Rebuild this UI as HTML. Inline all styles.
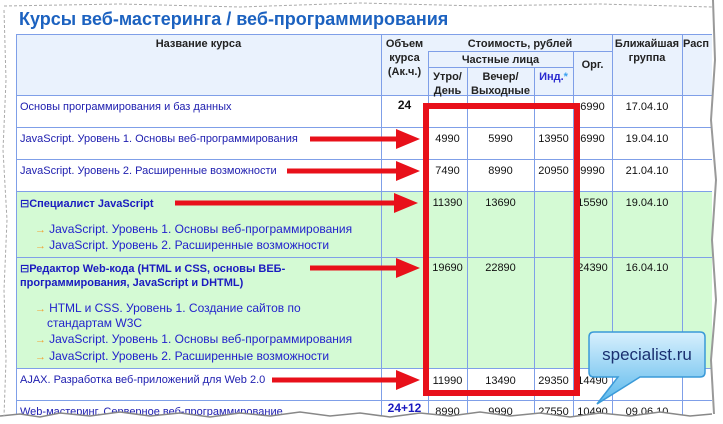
<!DOCTYPE html>
<html><head><meta charset="utf-8"><style>
body{margin:0;width:723px;height:424px;background:#fff;overflow:hidden;position:relative;font-family:"Liberation Sans","DejaVu Sans",sans-serif}
.a{position:absolute}
.t{position:absolute;font-size:11px;color:#2020b0;white-space:nowrap}
.n{position:absolute;font-size:11px;color:#111;white-space:nowrap;text-align:center}
.h{position:absolute;font-size:11px;font-weight:bold;color:#222;text-align:center;line-height:14px}
.vl{position:absolute;width:1px;background:#7f9fe8}
.hl{position:absolute;height:1px;background:#7f9fe8}
.s{position:absolute;font-size:12px;color:#2222cc;white-space:nowrap}
.s:before{content:"→ ";color:#f0a030;font-size:11px;font-weight:bold}
</style></head><body>
<div class="a" style="left:19px;top:9px;font-size:18px;font-weight:bold;color:#1c62c0">Курсы веб-мастеринга / веб-программирования</div>
<div class="a" style="left:16px;top:34px;width:696px;height:61px;background:#eaf2fd"></div>
<div class="a" style="left:16px;top:191px;width:696px;height:177px;background:#d4fad4"></div>
<div class="hl" style="left:16px;top:34px;width:696px"></div>
<div class="hl" style="left:428px;top:51px;width:184px"></div>
<div class="hl" style="left:428px;top:67px;width:145px"></div>
<div class="hl" style="left:16px;top:95px;width:696px"></div>
<div class="hl" style="left:16px;top:127px;width:696px"></div>
<div class="hl" style="left:16px;top:159px;width:696px"></div>
<div class="hl" style="left:16px;top:191px;width:696px"></div>
<div class="hl" style="left:16px;top:257px;width:696px"></div>
<div class="hl" style="left:16px;top:368px;width:696px"></div>
<div class="hl" style="left:16px;top:400px;width:696px"></div>
<div class="vl" style="left:16px;top:34px;height:390px"></div>
<div class="vl" style="left:381px;top:34px;height:390px"></div>
<div class="vl" style="left:428px;top:51px;height:373px"></div>
<div class="vl" style="left:467px;top:67px;height:357px"></div>
<div class="vl" style="left:534px;top:67px;height:357px"></div>
<div class="vl" style="left:573px;top:51px;height:373px"></div>
<div class="vl" style="left:612px;top:34px;height:390px"></div>
<div class="vl" style="left:682px;top:34px;height:390px"></div>
<div class="h" style="left:16px;top:37px;width:365px">Название курса</div>
<div class="h" style="left:381px;top:37px;width:47px">Объем курса (Ак.ч.)</div>
<div class="h" style="left:428px;top:37px;width:184px">Стоимость, рублей</div>
<div class="h" style="left:428px;top:53px;width:145px">Частные лица</div>
<div class="h" style="left:573px;top:58px;width:39px">Орг.</div>
<div class="h" style="left:612px;top:37px;width:70px">Ближайшая группа</div>
<div class="h" style="left:683px;top:37px;width:40px;text-align:left">Расп</div>
<div class="h" style="left:428px;top:70px;width:39px">Утро/ День</div>
<div class="h" style="left:467px;top:70px;width:67px">Вечер/ Выходные</div>
<div class="h" style="left:534px;top:70px;width:39px;color:#2a2ad0">Инд.<span style="color:#3aa0f0">*</span></div>
<div class="t" style="left:20px;top:101px">Основы программирования и баз данных</div>
<div class="n" style="left:381px;top:98px;width:47px;font-weight:bold;font-size:12px">24</div>
<div class="n" style="left:573px;top:101px;width:39px">6990</div>
<div class="n" style="left:612px;top:101px;width:70px">17.04.10</div>
<div class="t" style="left:20px;top:133px">JavaScript. Уровень 1. Основы веб-программирования</div>
<div class="n" style="left:428px;top:133px;width:39px">4990</div><div class="n" style="left:467px;top:133px;width:67px">5990</div><div class="n" style="left:534px;top:133px;width:39px">13950</div><div class="n" style="left:573px;top:133px;width:39px">6990</div><div class="n" style="left:612px;top:133px;width:70px">19.04.10</div>
<div class="t" style="left:20px;top:165px">JavaScript. Уровень 2. Расширенные возможности</div>
<div class="n" style="left:428px;top:165px;width:39px">7490</div><div class="n" style="left:467px;top:165px;width:67px">8990</div><div class="n" style="left:534px;top:165px;width:39px">20950</div><div class="n" style="left:573px;top:165px;width:39px">9990</div><div class="n" style="left:612px;top:165px;width:70px">21.04.10</div>
<div class="t" style="left:20px;top:197px;font-weight:bold;color:#1a1ac0">⊟Специалист JavaScript</div>
<div class="s" style="left:35px;top:222px">JavaScript. Уровень 1. Основы веб-программирования</div>
<div class="s" style="left:35px;top:238px">JavaScript. Уровень 2. Расширенные возможности</div>
<div class="n" style="left:428px;top:197px;width:39px">11390</div><div class="n" style="left:467px;top:197px;width:67px">13690</div><div class="n" style="left:573px;top:197px;width:39px">15590</div><div class="n" style="left:612px;top:197px;width:70px">19.04.10</div>
<div class="t" style="left:20px;top:262px;font-weight:bold;color:#1a1ac0;line-height:14px">⊟Редактор Web-кода (HTML и CSS, основы ВЕБ-<br>программирования, JavaScript и DHTML)</div>
<div class="s" style="left:35px;top:301px">HTML и CSS. Уровень 1. Создание сайтов по</div>
<div class="a" style="left:47px;top:316px;font-size:12px;color:#2222cc">стандартам W3C</div>
<div class="s" style="left:35px;top:332px">JavaScript. Уровень 1. Основы веб-программирования</div>
<div class="s" style="left:35px;top:349px">JavaScript. Уровень 2. Расширенные возможности</div>
<div class="n" style="left:428px;top:262px;width:39px">19690</div><div class="n" style="left:467px;top:262px;width:67px">22890</div><div class="n" style="left:573px;top:262px;width:39px">24390</div><div class="n" style="left:612px;top:262px;width:70px">16.04.10</div>
<div class="t" style="left:20px;top:374px">AJAX. Разработка веб-приложений для Web 2.0</div>
<div class="n" style="left:428px;top:375px;width:39px">11990</div><div class="n" style="left:467px;top:375px;width:67px">13490</div><div class="n" style="left:534px;top:375px;width:39px">29350</div><div class="n" style="left:573px;top:375px;width:39px">14490</div>
<div class="t" style="left:20px;top:406px">Web-мастеринг. Серверное веб-программирование</div>
<div class="n" style="left:381px;top:401px;width:47px;font-weight:bold;font-size:12px;color:#1a1ac0">24+12</div>
<div class="n" style="left:428px;top:406px;width:39px">8990</div><div class="n" style="left:467px;top:406px;width:67px">9990</div><div class="n" style="left:534px;top:406px;width:39px">27550</div><div class="n" style="left:573px;top:406px;width:39px">10490</div><div class="n" style="left:612px;top:406px;width:70px">09.06.10</div>
<svg class="a" style="left:0;top:0" width="723" height="424">
<rect x="426" y="106" width="151" height="287" fill="none" stroke="#e8101a" stroke-width="6"/>
<g stroke="#e8101a" stroke-width="5" fill="#e8101a">
<line x1="310" y1="139" x2="400" y2="139"/><polygon points="396,129 420,139 396,149" stroke="none"/>
<line x1="287" y1="171" x2="400" y2="171"/><polygon points="396,161 420,171 396,181" stroke="none"/>
<line x1="175" y1="203" x2="398" y2="203"/><polygon points="394,193 418,203 394,213" stroke="none"/>
<line x1="310" y1="268" x2="400" y2="268"/><polygon points="396,258 420,268 396,278" stroke="none"/>
<line x1="272" y1="380" x2="400" y2="380"/><polygon points="396,370 420,380 396,390" stroke="none"/>
</g>
<defs><linearGradient id="g" x1="0" y1="0" x2="0" y2="1"><stop offset="0" stop-color="#d8f0fd"/><stop offset="1" stop-color="#5ab8ec"/></linearGradient></defs>
<path d="M594,332 H700 Q705,332 705,337 V372 Q705,377 700,377 H640 L597,404 L618,377 H594 Q589,377 589,372 V337 Q589,332 594,332 Z" fill="url(#g)" stroke="#3a9ad8" stroke-width="1.5"/>
<text x="647" y="360" text-anchor="middle" font-family="Liberation Sans,sans-serif" font-size="17" fill="#1a3070">specialist.ru</text>
<path d="M0,424 V416 L20,414 L40,417 L60,413 L90,416 L120,412 L150,416 L180,413 L210,417 L240,413 L270,416 L300,412 L330,416 L360,413 L390,417 L420,413 L450,416 L480,412 L510,416 L540,413 L570,417 L600,413 L630,416 L660,412 L690,416 L712,414 L712,0 H723 V424 Z" fill="#fff"/>
<path d="M0,416 L20,414 L40,417 L60,413 L90,416 L120,412 L150,416 L180,413 L210,417 L240,413 L270,416 L300,412 L330,416 L360,413 L390,417 L420,413 L450,416 L480,412 L510,416 L540,413 L570,417 L600,413 L630,416 L660,412 L690,416 L712,414" fill="none" stroke="#888" stroke-width="1.5"/>
<path d="M713,0 L715,60 L711,120 L716,180 L712,240 L716,300 L711,360 L714,414" fill="none" stroke="#999" stroke-width="2"/>
<path d="M4,10 L6,80 L3,150 L7,220 L4,290 L6,360 L4,416" fill="none" stroke="#aaa" stroke-width="1" stroke-dasharray="3,2"/>
<path d="M4,6 L120,4 L240,7 L360,3 L480,6 L600,4 L712,7" fill="none" stroke="#aaa" stroke-width="1" stroke-dasharray="3,2"/>
</svg>
</body></html>
